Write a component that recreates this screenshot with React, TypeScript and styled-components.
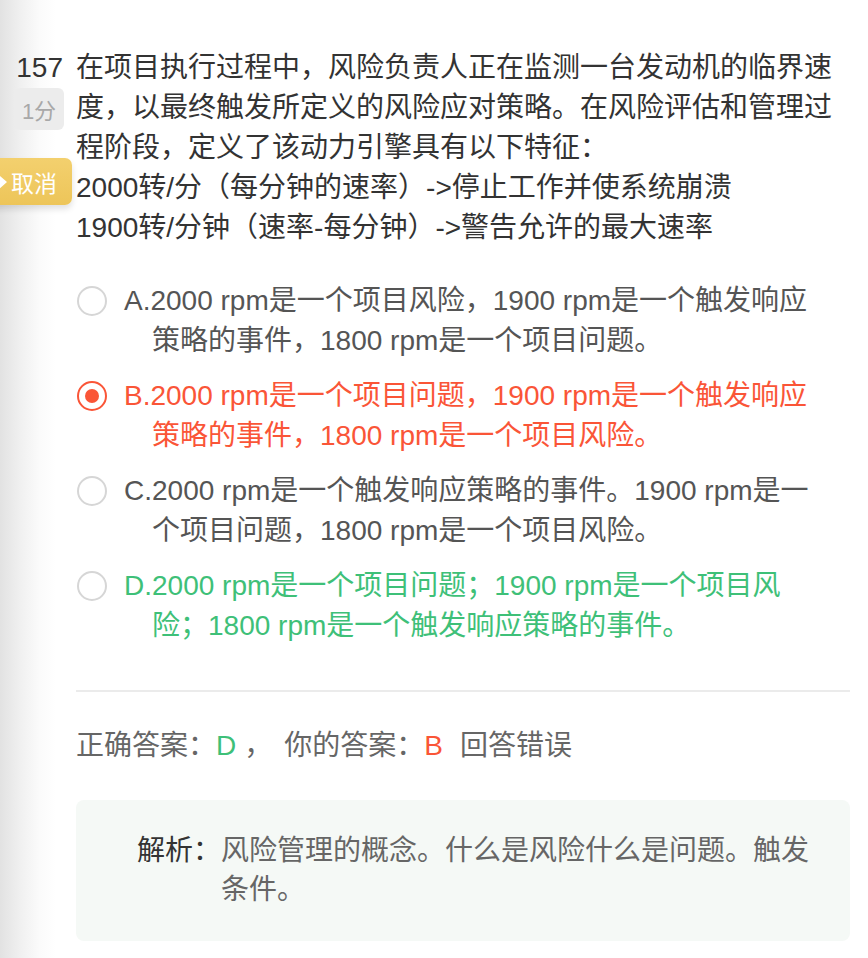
import { createGlobalStyle, styled } from 'styled-components';

const GlobalStyle = createGlobalStyle`
  html, body {
    margin: 0;
    padding: 0;
  }
  body {
    background: linear-gradient(90deg, #e2e2e2 0, #f1f1f1 22px, #fbfbfb 40px, #fff 56px);
    font-family: 'Liberation Sans', 'Noto Sans CJK SC', sans-serif;
    overflow-x: hidden;
  }
`;

const red = '#fa5537';
const green = '#3ec078';

const Page = styled.div`
  padding: 48px 18px 18px 0;
  min-height: 958px;
  box-sizing: border-box;
`;

const QuestionRow = styled.div`
  display: flex;
  align-items: flex-start;
`;

const Gutter = styled.div`
  width: 76px;
  flex-shrink: 0;
  display: flex;
  flex-direction: column;
  align-items: flex-end;
  padding-right: 12px;
  box-sizing: border-box;
`;

const Number = styled.div`
  font-size: 28px;
  line-height: 40px;
  color: #333;
  margin-right: 1px;
`;

const ScoreTag = styled.div`
  width: 50px;
  height: 42px;
  border-radius: 6px;
  background: #ececec;
  color: #a8a8a8;
  font-size: 22px;
  display: flex;
  align-items: center;
  justify-content: center;
`;

const CancelTag = styled.div`
  margin-top: 28px;
  margin-right: -8px;
  width: 80px;
  height: 47px;
  border-radius: 0 7px 7px 0;
  background: linear-gradient(180deg, #f3d06e, #edc559);
  box-shadow: 0 4px 6px rgba(0, 0, 0, 0.12);
  color: #fff;
  font-size: 23px;
  display: flex;
  align-items: center;
  justify-content: space-between;
  padding-right: 15px;
  box-sizing: border-box;
`;

const Heart = styled.svg`
  width: 16px;
  height: 16px;
`;

const QuestionText = styled.div`
  flex: 1;
  font-size: 28px;
  line-height: 40px;
  color: #333;
`;

const Body = styled.div`
  margin-left: 76px;
`;

const Options = styled.div`
  margin-top: 33px;
  display: flex;
  flex-direction: column;
  gap: 15px;
  padding-right: 28px;
`;

const Option = styled.div<{ $tone: string }>`
  display: flex;
  align-items: flex-start;
  color: ${({ $tone }) => $tone};
`;

const Radio = styled.span<{ $checked?: boolean; $tone: string }>`
  width: 30px;
  height: 30px;
  margin: 5px 17px 0 1px;
  flex-shrink: 0;
  border-radius: 50%;
  border: 2px solid ${({ $checked, $tone }) => ($checked ? $tone : '#d6d6d6')};
  background: #fff;
  box-sizing: border-box;
  display: flex;
  align-items: center;
  justify-content: center;

  &::after {
    content: '';
    display: ${({ $checked }) => ($checked ? 'block' : 'none')};
    width: 14px;
    height: 14px;
    border-radius: 50%;
    background: ${({ $tone }) => $tone};
  }
`;

const OptionText = styled.div`
  flex: 1;
  font-size: 28px;
  line-height: 40px;
  padding-left: 28px;
  text-indent: -28px;
`;

const Divider = styled.hr`
  margin: 44px 0 0;
  border: none;
  height: 2px;
  background: #ebebeb;
`;

const AnswerLine = styled.div`
  margin-top: 34px;
  font-size: 28px;
  line-height: 40px;
  color: #666;
`;

const Mark = styled.span<{ $tone: string; $gap?: number; $after?: number }>`
  color: ${({ $tone }) => $tone};
  margin-left: ${({ $gap }) => $gap ?? 0}px;
  margin-right: ${({ $after }) => $after ?? 0}px;
`;

const Analysis = styled.div`
  margin-top: 34px;
  background: #f5f9f6;
  border-radius: 8px;
  padding: 31px 30px 32px 61px;
  display: flex;
  align-items: flex-start;
  font-size: 28px;
  line-height: 39px;
`;

const AnalysisLabel = styled.span`
  color: #333;
  flex-shrink: 0;
`;

const AnalysisText = styled.span`
  color: #666;
  flex: 1;
`;

const options = [
  {
    key: 'A',
    text: 'A.2000 rpm是一个项目风险，1900 rpm是一个触发响应策略的事件，1800 rpm是一个项目问题。',
    tone: '#555',
  },
  {
    key: 'B',
    text: 'B.2000 rpm是一个项目问题，1900 rpm是一个触发响应策略的事件，1800 rpm是一个项目风险。',
    tone: red,
    checked: true,
  },
  {
    key: 'C',
    text: 'C.2000 rpm是一个触发响应策略的事件。1900 rpm是一个项目问题，1800 rpm是一个项目风险。',
    tone: '#555',
  },
  {
    key: 'D',
    text: 'D.2000 rpm是一个项目问题；1900 rpm是一个项目风险；1800 rpm是一个触发响应策略的事件。',
    tone: green,
  },
];

export default function App() {
  return (
    <>
      <GlobalStyle />
      <Page>
        <QuestionRow>
          <Gutter>
            <Number>157</Number>
            <ScoreTag>1分</ScoreTag>
            <CancelTag>
              <Heart viewBox="0 0 16 16">
                <path
                  d="M15 8 L7 15 C3 15 1 12.5 1 10.5 C1 9 2 8 2 8 C2 8 1 7 1 5.5 C1 3.5 3 1 7 1 Z"
                  fill="#fff"
                />
              </Heart>
              <span>取消</span>
            </CancelTag>
          </Gutter>
          <QuestionText>
            在项目执行过程中，风险负责人正在监测一台发动机的临界速度，以最终触发所定义的风险应对策略。在风险评估和管理过程阶段，定义了该动力引擎具有以下特征：
            <br />
            2000转/分（每分钟的速率）-&gt;停止工作并使系统崩溃
            <br />
            1900转/分钟（速率-每分钟）-&gt;警告允许的最大速率
          </QuestionText>
        </QuestionRow>
        <Body>
          <Options>
            {options.map((o) => (
              <Option key={o.key} $tone={o.tone}>
                <Radio $checked={o.checked} $tone={o.tone} />
                <OptionText>{o.text}</OptionText>
              </Option>
            ))}
          </Options>
          <Divider />
          <AnswerLine>
            正确答案：<Mark $tone={green} $after={8}>D</Mark>，
            <Mark $tone="#666" $gap={12}>你的答案：</Mark>
            <Mark $tone={red}>B</Mark>
            <Mark $tone="#666" $gap={17}>回答错误</Mark>
          </AnswerLine>
          <Analysis>
            <AnalysisLabel>解析：</AnalysisLabel>
            <AnalysisText>风险管理的概念。什么是风险什么是问题。触发条件。</AnalysisText>
          </Analysis>
        </Body>
      </Page>
    </>
  );
}
